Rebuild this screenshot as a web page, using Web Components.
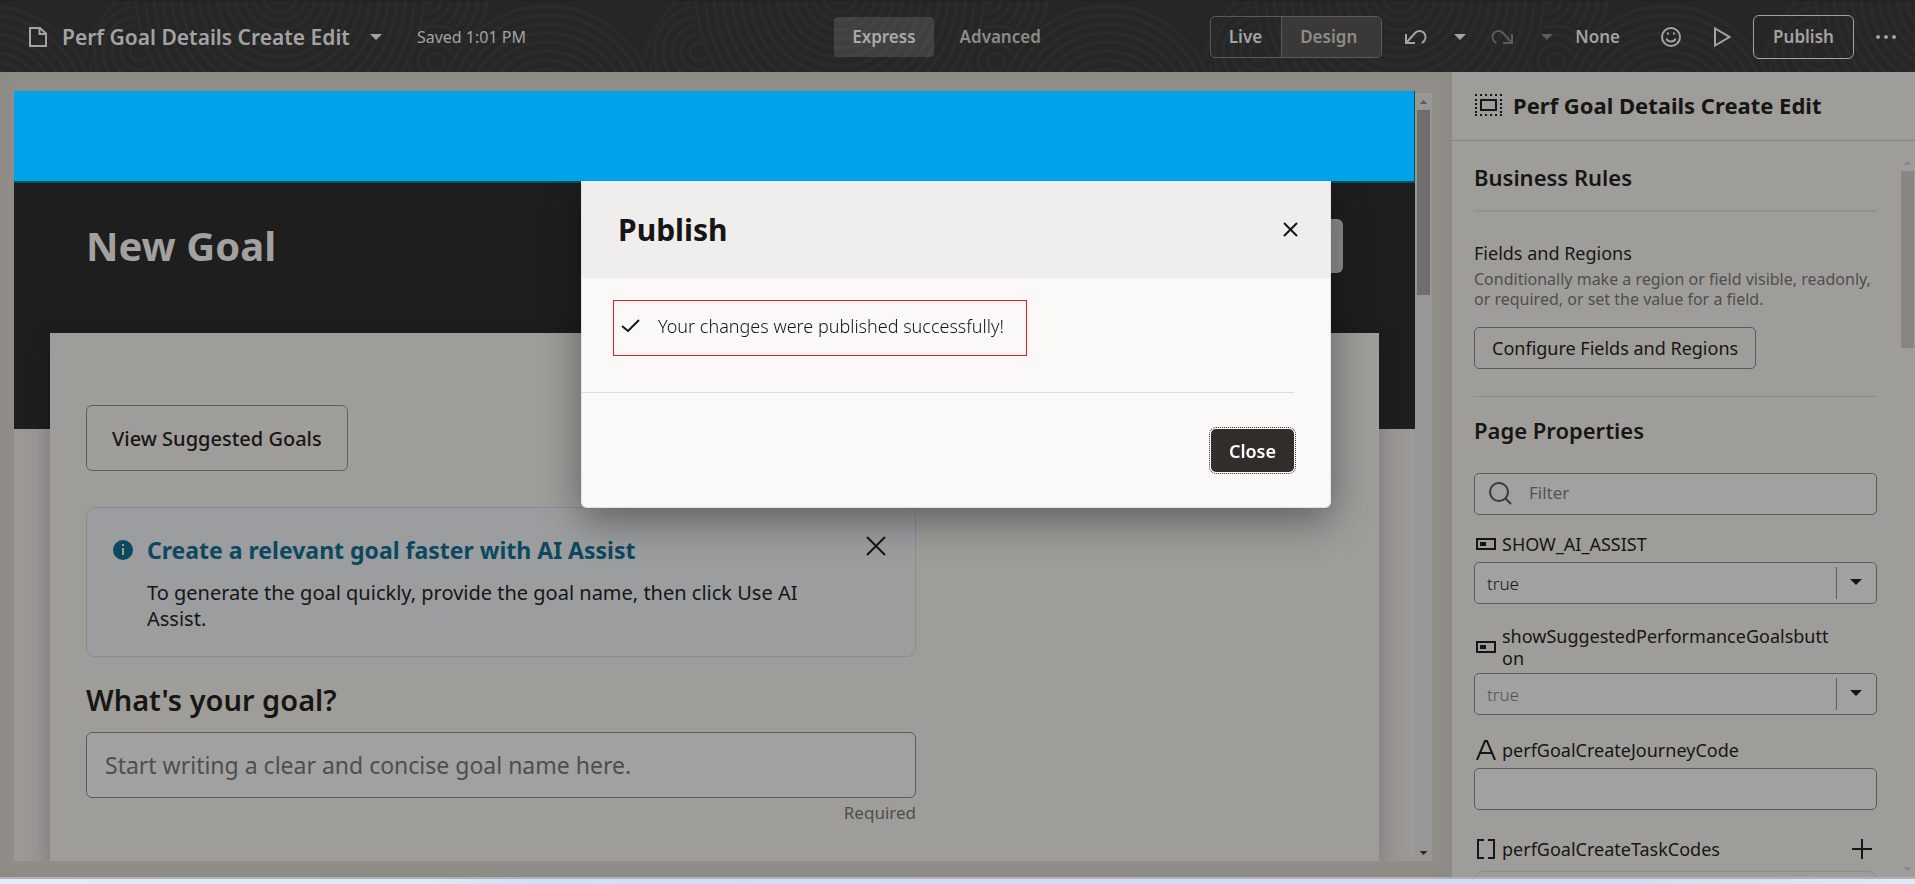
<!DOCTYPE html>
<html lang="en">
<head>
<meta charset="utf-8">
<title>Perf Goal Details Create Edit</title>
<style>
html,body{height:100%;margin:0}
body{font-family:"Noto Sans","Open Sans",sans-serif;font-size:17px;color:#171615;background:#918d89;overflow:hidden}
</style>
</head>
<body>
<studio-app></studio-app>
<script>
const base = `<style>
*,*::before,*::after{box-sizing:border-box}
h1,h2,h3,p{margin:0}
button,input,select{font:inherit;color:inherit;margin:0;padding:0;border:0;background:none;border-radius:0;outline:0}
button{white-space:nowrap;cursor:pointer}
svg{display:block;flex:none}
</style>`;
function define(name, html) {
  const tpl = document.createElement('template');
  tpl.innerHTML = base + html;
  customElements.define(name, class extends HTMLElement {
    connectedCallback() {
      if (this.shadowRoot) return;
      this.attachShadow({mode: 'open'}).append(tpl.content.cloneNode(true));
    }
  });
}

/* Concentric rings used for the header texture */
function rings(cx, cy, max, step = 9) {
  let out = `<circle cx="${cx}" cy="${cy}" r="${max + 4}" fill="#262626"/>`;
  for (let r = max; r > 0; r -= step) out += `<circle cx="${cx}" cy="${cy}" r="${r}" fill="none" stroke="#2b2b2b" stroke-width="3"/>`;
  return out;
}

define('header-texture', `<style>:host{display:block;position:absolute;inset:0;z-index:-1}svg{width:100%;height:100%}</style>
<svg aria-hidden="true"><defs><pattern id="p" width="560" height="72" patternUnits="userSpaceOnUse">
<rect width="560" height="72" fill="#262626"/>
${rings(206, 90, 126)}${rings(350, 90, 117)}${rings(139, 52, 45)}${rings(424, -4, 63)}${rings(436, 62, 36)}${rings(280, -6, 144)}${rings(547, 114, 108)}${rings(-13, 114, 108)}
</pattern></defs><rect width="100%" height="100%" fill="url(#p)"/></svg>`);

define('caret-icon', `<style>:host{display:block}svg{fill:currentColor}</style>
<svg width="12" height="6" viewBox="0 0 12 6" aria-hidden="true"><path d="M0 0h12L6 6z"/></svg>`);

define('studio-header', `<style>
:host{display:block;position:relative;z-index:0;color:#a3a3a3}
header{height:72px;display:grid;grid-template-columns:1fr auto 1fr;align-items:center;padding:0 18px 0 28px;border-top:1px solid #222}
.left,.mid,.right{display:flex;align-items:center}
.right{justify-content:flex-end}
h1{font-size:21px;font-weight:600;line-height:30px;margin-left:14px;white-space:nowrap}
.menu{margin:0 35px 0 20px}
.saved{font-size:16px;white-space:nowrap}
button{font-weight:600;line-height:24px}
.mid{gap:8px;margin-right:32px}
.mid button{height:40px;padding:0 18px;color:#8e8b88;border-radius:4px}
.mid button.on{background:rgba(255,255,255,.12);color:#a9a9a9}
.seg{display:flex;height:42px;border:1px solid #5c5a58;border-radius:5px;overflow:hidden;margin-right:23px}
.seg button{padding:0 19px 0 18px}
.seg button+button{border-left:1px solid #5c5a58;background:#3b3937;color:#8e8b88;padding:0 24px 0 18px}
.dim{color:#5b5b5b}
.car{margin:0 25px 0 27px}
.car2{margin:0 22px 0 28px}
.smile{margin:0 31px 0 40px}
.pub{width:101px;height:44px;border:1px solid #a3a3a3;border-radius:6px;margin:0 21px}
</style>
<header>
<header-texture></header-texture>
<div class="left">
<svg width="20" height="20" viewBox="0 0 20 20" fill="none" stroke="currentColor" stroke-width="2" aria-hidden="true"><path d="M2 1h10l6 5.500v12.500h-16zM11.500 1v6h6"/></svg>
<h1>Perf Goal Details Create Edit</h1>
<button class="menu" aria-label="Page menu"><caret-icon></caret-icon></button>
<span class="saved">Saved 1:01 PM</span>
</div>
<div class="mid"><button class="on">Express</button><button>Advanced</button></div>
<div class="right">
<div class="seg"><button>Live</button><button>Design</button></div>
<button aria-label="Undo"><svg width="22" height="16" viewBox="0 0 22 16" fill="none" stroke="currentColor" stroke-width="2"><path d="M1 5v9h9M1.500 13.500L10 4a6 6 0 1 1 9 8l-2 2"/></svg></button>
<button class="car" aria-label="Undo history"><caret-icon></caret-icon></button>
<button class="dim" aria-label="Redo"><svg width="22" height="16" viewBox="0 0 22 16" fill="none" stroke="currentColor" stroke-width="2"><path d="M21 5v9h-9M20.500 13.500L12 4a6 6 0 1 0-9 8l2 2"/></svg></button>
<button class="car2 dim" aria-label="Redo history"><caret-icon></caret-icon></button>
<button>None</button>
<button class="smile" aria-label="Feedback"><svg width="22" height="22" viewBox="0 0 22 22" fill="none" stroke="currentColor" stroke-width="2"><circle cx="11" cy="11" r="9"/><path d="M6.500 12.500c1 4 8 4 9 0"/><path d="M7 7.500h2M13 7.500h2" /></svg></button>
<button aria-label="Preview"><svg width="19" height="22" viewBox="0 0 19 22" fill="none" stroke="currentColor" stroke-width="2"><path d="M2 2.500v17L16.500 11z"/></svg></button>
<button class="pub">Publish</button>
<button aria-label="More actions"><svg width="22" height="6" viewBox="0 0 22 6" fill="currentColor"><circle cx="3" cy="3" r="2"/><circle cx="11" cy="3" r="2"/><circle cx="19" cy="3" r="2"/></svg></button>
</div>
</header>`);

define('scroll-track', `<style>
:host{display:flex;flex-direction:column;align-items:center;flex:none;padding:5px 0 6px;color:#5f5d5d}
.up,.down{width:8px;height:4px;background:currentColor;flex:none}
.up{clip-path:polygon(0 100%,50% 0,100% 100%);margin:var(--arrow-gap,4px) 0 6px}
.down{clip-path:polygon(0 0,100% 0,50% 100%);margin-top:auto;background:var(--down,currentColor)}
.thumb{width:13px;height:var(--thumb);background:var(--thumb-color)}
</style><div class="up"></div><div class="thumb"></div><div class="down"></div>`);

define('info-banner', `<style>
:host{display:block;margin-top:36px}
section{display:flex;border:1px solid #8a8e90;border-radius:9px;background:#9b9d9f;padding:28px 29px 24px 26px}
.ico{margin-top:4px}
.txt{flex:1;margin-left:14px;padding-right:40px}
h2{font-size:23px;font-weight:700;line-height:28px;color:#0c485e}
p{font-size:20px;line-height:26px;margin-top:16px}
button{height:20px}
</style>
<section>
<svg class="ico" width="20" height="20" viewBox="0 0 20 20" aria-hidden="true"><circle cx="10" cy="10" r="10" fill="#0c485e"/><path d="M9 4h2v2H9zM9 8h2v7H9z" fill="#9b9d9f"/></svg>
<div class="txt"><h2><slot name="title"></slot></h2><p><slot></slot></p></div>
<button aria-label="Dismiss"><svg width="20" height="20" viewBox="0 0 20 20" stroke="#171615" stroke-width="2"><path d="M1 1l18 18M19 1L1 19"/></svg></button>
</section>`);

define('goal-canvas', `<style>
:host{display:flex;min-width:0;min-height:0;flex:1;padding:19px 20px 16px 14px;background:#918d89;box-shadow:inset 0 0 14px #8a8883}
.page{flex:1;min-width:0;display:flex;flex-direction:column;background:#9b9896;overflow:hidden}
.blue{flex:none;height:90px;margin-right:1px;background:#00a3ea;position:relative;z-index:20;box-shadow:1px 0 #0b5553}
.hero{flex:none;height:248px;background:#1e1e1e;border-top:2px solid #0b5553;padding:36px 72px;display:flex;justify-content:space-between;align-items:flex-start}
.hero h1{font-size:40px;font-weight:700;line-height:54px;color:#a2a1a0}
.hero button{width:120px;height:54px;border-radius:6px;background:#8f8f8f}
.card{flex:1 0 0;margin:-96px 36px 0;padding:72px 36px 0;background:#9f9d9a;box-shadow:0 8px 24px rgba(0,0,0,.24)}
.view{height:66px;padding:0 25px;border:1px solid #5f5d5b;border-radius:6px;font-size:20px;font-weight:500}
.form{max-width:830px}
label{display:block;font-size:29px;font-weight:600;line-height:40px;margin:23px 0 12px}
input{display:block;width:100%;height:66px;border:1px solid #5c5b5a;border-radius:6px;background:#a1a1a1;font-size:23px;padding:0 18px}
input::placeholder{color:#4f4e4d;opacity:1}
.req{text-align:right;line-height:24px;margin-top:3px;color:#4f4e4d}
scroll-track{width:17px;background:#979797;margin-top:2px;--thumb:185px;--thumb-color:#706d6e;--arrow-gap:2px;--down:#2e2d2d}
</style>
<div class="page">
<div class="blue"></div>
<div class="hero"><h1>New Goal</h1><button aria-label="Save"></button></div>
<main class="card">
<button class="view">View Suggested Goals</button>
<div class="form">
<info-banner><span slot="title">Create a relevant goal faster with AI Assist</span>To generate the goal quickly, provide the goal name, then click Use AI Assist.</info-banner>
<label for="goal">What's your goal?</label>
<input id="goal" placeholder="Start writing a clear and concise goal name here.">
<p class="req">Required</p>
</div>
</main>
</div>
<scroll-track></scroll-track>`);

/* One property row: icon, name and an editor chosen by the kind attribute */
const kinds = {
  bool: '<rect x="1" y="5" width="18" height="10" fill="none" stroke="currentColor" stroke-width="2"/><path d="M4 8h6v4H4z" fill="currentColor"/>',
  text: '<path d="M1 20L9 1h2l8 19M4 13h12" fill="none" stroke="currentColor" stroke-width="2"/>',
  list: '<path d="M8 1H2v18h6M12 1h6v18h-6" fill="none" stroke="currentColor" stroke-width="2"/>'
};
customElements.define('property-field', class extends HTMLElement {
  connectedCallback() {
    if (this.shadowRoot) return;
    const kind = this.getAttribute('kind'), name = this.getAttribute('name');
    const editor = kind === 'bool'
      ? `<div class="sel"><select id="f"><option>true</option><option>false</option></select><caret-icon></caret-icon></div>`
      : kind === 'text' ? '<input id="f">' : '<input id="f" class="items" readonly>';
    this.attachShadow({mode: 'open'}).innerHTML = base + `<style>
:host{display:block}
.row{display:flex;align-items:center;min-height:28px;margin-bottom:4px;padding-left:2px}
:host([kind=list]) .row{min-height:36px}
label{flex:1;min-width:0;font-size:18px;line-height:22px;word-break:break-all;margin:0 48px 0 6px}
input,select{display:block;width:100%;height:42px;border:1px solid #5c5b5a;border-radius:5px;background:#a1a1a1;padding:0 12px}
.items{background:none;border-color:#8f8d8b;border-radius:9px}
select{appearance:none;font-weight:300}
:host([muted]) select{color:#545352}
.sel{position:relative}
.sel::after{content:"";position:absolute;right:40px;top:5px;bottom:5px;border-left:1px solid #5c5b5a}
.sel caret-icon{position:absolute;right:15px;top:17px;pointer-events:none}
button{margin-right:5px}
</style>
<div class="row"><svg width="20" height="20" viewBox="0 0 20 20" aria-hidden="true">${kinds[kind]}</svg><label for="f">${name}</label>${kind === 'list' ? '<button aria-label="Add item"><svg width="20" height="20" viewBox="0 0 20 20" stroke="currentColor" stroke-width="2"><path d="M10 0v20M0 10h20"/></svg></button>' : ''}</div>${editor}`;
  }
});

define('property-panel', `<style>
:host{display:flex;flex-direction:column;flex:0 0 463px;min-height:0;background:#9f9d9a}
header{display:flex;align-items:center;gap:10px;height:69px;flex:none;padding:0 0 2px 22px;border-bottom:1px solid #868482}
header h2{font-size:22px;font-weight:700;white-space:nowrap}
.body{flex:1;min-height:0;display:flex;overflow:hidden}
.content{flex:1;min-width:0;padding:21px 23px 0 22px}
h2{font-size:22px;font-weight:600;line-height:30px}
.rules{padding-bottom:18px;border-bottom:2px solid #93918e}
h3{font-size:18px;font-weight:400;line-height:22px;margin-top:30px}
p{font-size:16px;line-height:20px;margin-top:5px;color:#4f4e4d}
.conf{height:42px;margin-top:18px;padding:0 17px;border:1px solid #5c5b5a;border-radius:5px;font-size:18px}
.props{margin-top:27px;padding-top:18px;border-top:1px solid #8f8d8b}
.filter{display:flex;align-items:center;height:42px;margin:28px 0 15px;padding-left:14px;border:1px solid #5c5b5a;border-radius:5px;background:#a1a1a1}
.filter input{flex:1;min-width:0;margin-left:16px;padding-bottom:4px}
.filter input::placeholder{color:#545352;opacity:1}
.rows{display:flex;flex-direction:column;gap:21px}
scroll-track{width:15px;margin-top:9px;color:#8a8886;--thumb:177px;--thumb-color:#8a8583;--arrow-gap:6px}
</style>
<header><svg width="29" height="24" viewBox="0 0 29 24" fill="none" stroke="currentColor" aria-hidden="true"><path stroke-width="2" stroke-dasharray="2 3" d="M1 2h28M1 22h28"/><path stroke-width="2" stroke-dasharray="2 2" d="M2 6v14M27 6v14"/><rect x="7" y="7" width="15" height="10" stroke-width="2"/></svg><h2>Perf Goal Details Create Edit</h2></header>
<div class="body">
<div class="content">
<h2 class="rules">Business Rules</h2>
<h3>Fields and Regions</h3>
<p>Conditionally make a region or field visible, readonly, or required, or set the value for a field.</p>
<button class="conf">Configure Fields and Regions</button>
<h2 class="props">Page Properties</h2>
<div class="filter"><svg width="24" height="24" viewBox="0 0 24 24" fill="none" stroke="#3a3938" stroke-width="2" aria-hidden="true"><circle cx="10" cy="10" r="9"/><path d="M16 16l6 6"/></svg><input aria-label="Filter" placeholder="Filter"></div>
<div class="rows">
<property-field kind="bool" name="SHOW_AI_ASSIST"></property-field>
<property-field kind="bool" name="showSuggestedPerformanceGoalsbutton" muted></property-field>
<property-field kind="text" name="perfGoalCreateJourneyCode"></property-field>
<property-field kind="list" name="perfGoalCreateTaskCodes"></property-field>
</div>
</div>
<scroll-track></scroll-track>
</div>`);

define('publish-dialog', `<style>
:host{position:fixed;inset:0;z-index:10;display:flex;justify-content:center;align-items:flex-start;padding:181px 3px 0 0}
.box{width:750px;max-width:90vw;background:#fbf9f8;border:1px solid #e4e2e0;border-top:0;border-radius:0 0 6px 6px;box-shadow:0 12px 40px rgba(0,0,0,.4)}
header{display:flex;align-items:center;justify-content:space-between;height:97px;background:#f0eeec;padding:0 31px 0 36px}
h2{font-size:30px;font-weight:700;line-height:40px}
.msg{display:flex;align-items:center;width:414px;height:56px;margin:22px 0 36px 31px;padding:0 0 4px 7px;border:1px solid #ed1c24;font-size:18px;font-weight:300;white-space:nowrap}
.msg svg{margin-right:18px}
footer{display:flex;justify-content:flex-end;margin-right:36px;padding:36px 0 35px;border-top:1px solid #dedcda}
footer button{height:43px;padding:0 18px;border-radius:5px;background:#312d2a;color:#fff;font-size:18px;font-weight:600;outline:1px dotted #312d2a;outline-offset:1px}
</style>
<div class="box" role="dialog" aria-modal="true" aria-labelledby="t">
<header><h2 id="t">Publish</h2><button aria-label="Close dialog"><svg width="16" height="16" viewBox="0 0 16 16" stroke="currentColor" stroke-width="2"><path d="M1 1l13 13M14 1L1 14"/></svg></button></header>
<div class="msg"><svg width="19" height="14" viewBox="0 0 19 14" fill="none" stroke="#171615" stroke-width="2" aria-hidden="true"><path d="M1 7l6 5L18 1"/></svg>Your changes were published successfully!</div>
<footer><button>Close</button></footer>
</div>`);

define('studio-app', `<style>
:host{display:flex;flex-direction:column;height:100vh}
.work{flex:1;min-height:0;display:flex}
.strip{flex:none;height:7px;border-top:2px solid #b0b2b8;background:linear-gradient(90deg,#e3ebf7 0%,#dfe8f6 22%,#d2def8 28%,#d5dbf5 50%,#d4dbf2 85%,#dfeaf5 100%)}
studio-header{flex:none}
</style>
<studio-header></studio-header>
<div class="work"><goal-canvas></goal-canvas><property-panel></property-panel></div>
<div class="strip"></div>
<publish-dialog></publish-dialog>`);
</script>
</body>
</html>
